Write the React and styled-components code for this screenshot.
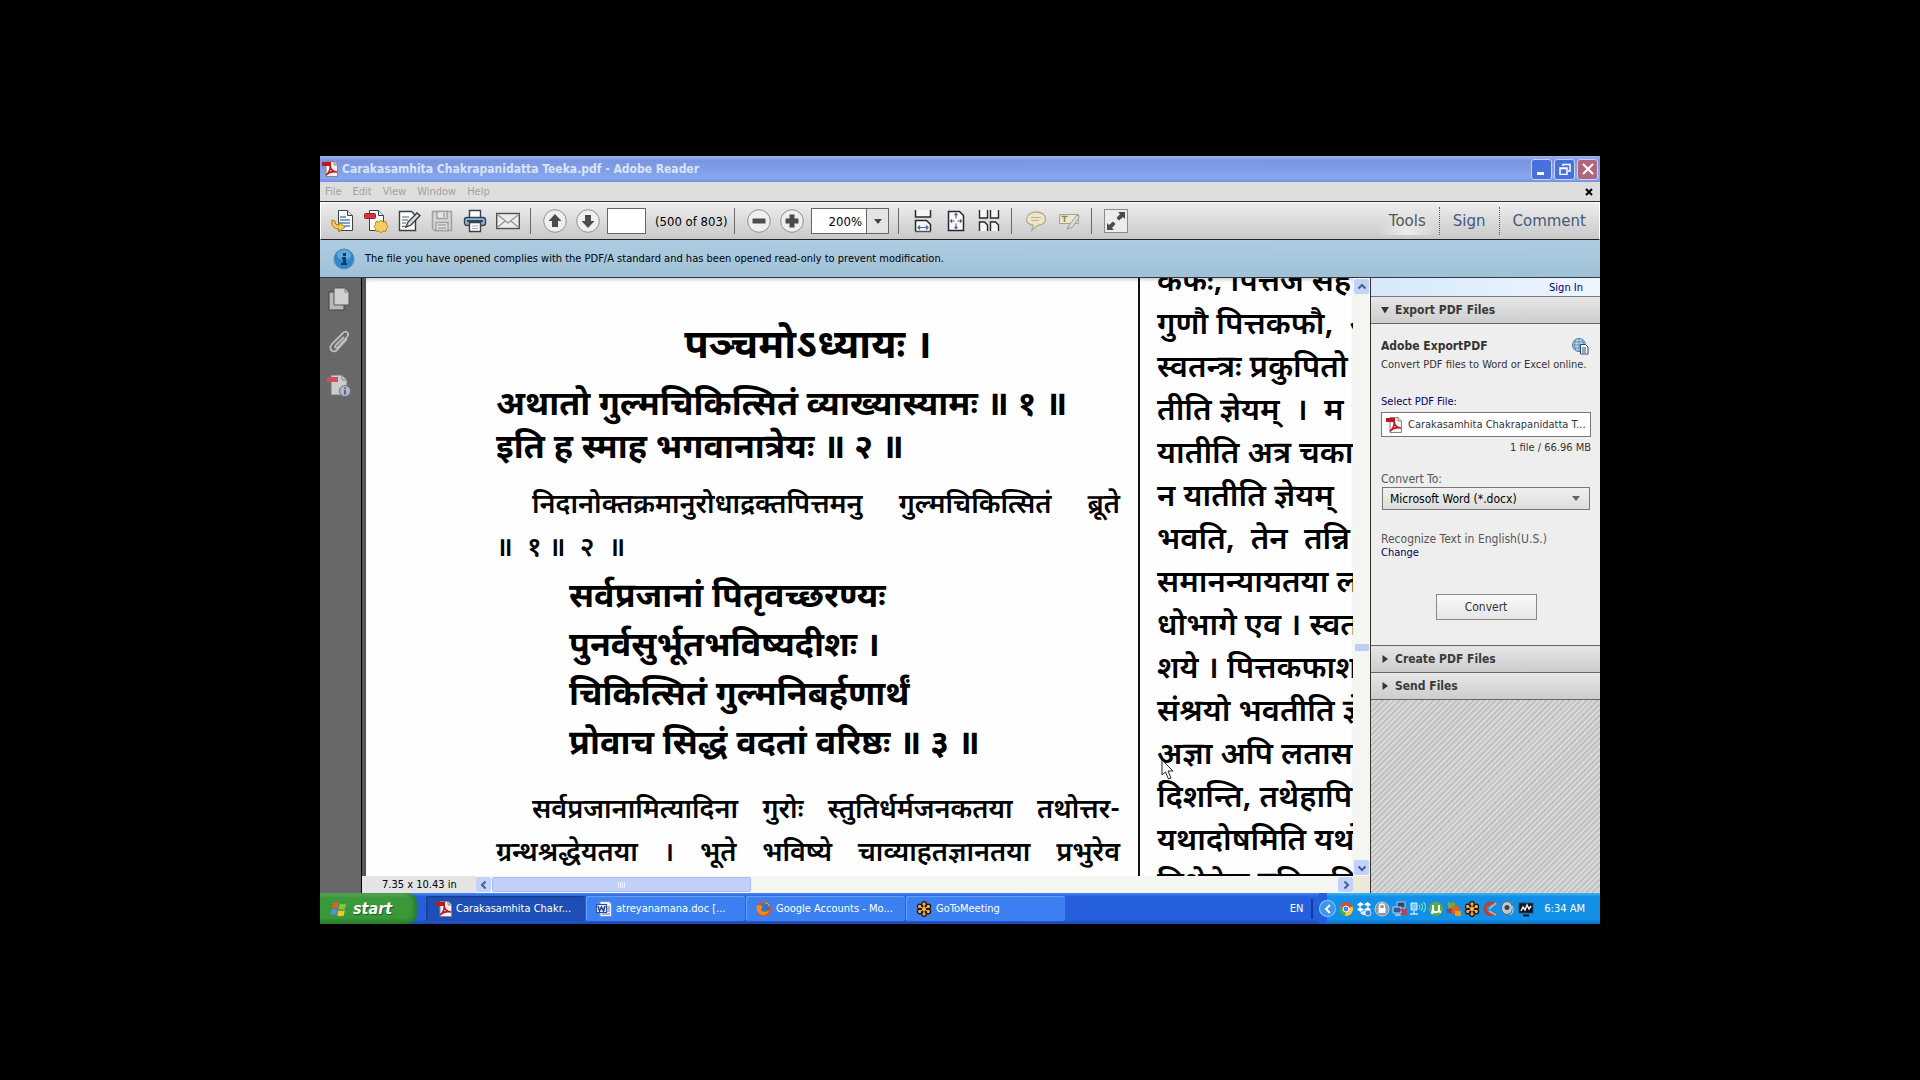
import { useState } from 'react'
import styled, { createGlobalStyle, css } from 'styled-components'

const GlobalStyle = createGlobalStyle`
  * { box-sizing: border-box; }
  body {
    margin: 0;
    background: #000;
    font-family: "DejaVu Sans Condensed", "DejaVu Sans", sans-serif;
    font-size: 11px;
    color: #000;
  }
  button, input, select { font: inherit; color: inherit; margin: 0; }
  button { padding: 0; border: 0; background: none; }
  svg { display: block; flex: none; }
`

const verses = [
  'सर्वप्रजानां पितृवच्छरण्यः',
  'पुनर्वसुर्भूतभविष्यदीशः ।',
  'चिकित्सितं गुल्मनिबर्हणार्थं',
  'प्रोवाच सिद्धं वदतां वरिष्ठः ॥ ३ ॥',
]

const rightLines = [
  'कफः, पित्तज सह',
  'गुणौ पित्तकफौ, \u00a0अ',
  'स्वतन्त्रः प्रकुपितो',
  'तीति ज्ञेयम् \u00a0। \u00a0म',
  'यातीति अत्र चका',
  'न यातीति ज्ञेयम्',
  'भवति, \u00a0तेन \u00a0तन्नि',
  'समानन्यायतया ल',
  'धोभागे एव । स्वत',
  'शये । पित्तकफाश',
  'संश्रयो भवतीति ज्ञे',
  'अज्ञा अपि लतासम',
  'दिशन्ति, तथेहापि',
  'यथादोषमिति यथो',
  'विशेषेण प्रतिपादि',
]

const PdfIcon = ({ size = 16 }) => (
  <svg width={size} height={size} viewBox='0 0 16 16'>
    <path d='M4 .5h8l3.500 3.500v11.500H4z' fill='#f6f4f2' stroke='#8b8583' />
    <path d='M12 .5V4h3.500' fill='#ddd' stroke='#8b8583' />
    <path d='M0 1h9v4H0z' fill='#c01820' />
    <path d='M4 14c3-2 5-6 4-9 1 4 3 6 7 6-4-1-8 0-11 3z' fill='none' stroke='#c01820' strokeWidth='1.600' />
  </svg>
)

const WordIcon = () => (
  <svg width='16' height='16' viewBox='0 0 16 16'>
    <path d='M4 .5h9l2.500 2.500v12.500H4z' fill='#e9f0fb' stroke='#7b93c4' />
    <path d='M11 6h3M11 8h3M11 10h3M6 13h8' stroke='#5b7dc0' />
    <rect x='0.500' y='3.500' width='10' height='8' fill='#dfe8f8' stroke='#2b4f98' />
    <path d='M2 5l1.500 5L5.500 6l2 4L9 5' fill='none' stroke='#1c3f8c' strokeWidth='1.400' />
  </svg>
)

const FirefoxIcon = () => (
  <svg width='16' height='16' viewBox='0 0 16 16'>
    <circle cx='8' cy='8' r='7.500' fill='#e0561b' />
    <circle cx='9' cy='7' r='5' fill='#3a74b8' />
    <path d='M1 4c1 1 3 0 5 1 1 1 0 2-1 3 0 3 5 4 8 1-1 5-6 6-9 4S0 8 1 4z' fill='#f08a24' />
    <path d='M9 2c2 0 4 1 4 3' stroke='#9cc8e8' fill='none' />
  </svg>
)

const FlowerIcon = () => (
  <svg width='16' height='16' viewBox='0 0 16 16'>
    <g fill='#f2b04a' stroke='#1d1206' strokeWidth='1.300'>
      <circle cx='8' cy='3' r='2.300' />
      <circle cx='12.300' cy='5.500' r='2.300' />
      <circle cx='12.300' cy='10.500' r='2.300' />
      <circle cx='8' cy='13' r='2.300' />
      <circle cx='3.700' cy='10.500' r='2.300' />
      <circle cx='3.700' cy='5.500' r='2.300' />
    </g>
    <circle cx='8' cy='8' r='2.400' fill='#f8d28c' stroke='#1d1206' />
    <path d='M8 4v8M4.500 6l7 4M11.500 6l-7 4' stroke='#f2b04a' />
  </svg>
)

const WindowsFlag = () => (
  <svg width='18' height='18' viewBox='0 0 18 18'>
    <path d='M3 3c2-1.500 4-1 5.500 0L7.500 8.500C6 7.500 4 7.500 2 8.500z' fill='#e8592b' />
    <path d='M9.500 3.500c2 1 4 1 6.500 0L15 9c-2 1-4.500 1-6.500 0z' fill='#86c440' />
    <path d='M1.800 9.800c2-1.300 4-1 5.500 0l-1 5.200c-1.500-1-3.500-1-5.500 0z' fill='#5b8df0' />
    <path d='M8.300 10.200c2 1 4 1 6.500 0l-1 5.300c-2 1-4.500 1-6.500 0z' fill='#f8c52c' />
  </svg>
)

const toolIcons = {
  open: (
    <>
      <path d='M7.500 1.500h9l5 5v15h-14z' fill='#fff' stroke='#3c4146' />
      <path d='M16.500 1.500v5h5' fill='#dfe3e6' stroke='#3c4146' />
      <path d='M9 8h6M9 11h10M9 14h10M13 17h6' stroke='#5580b8' strokeWidth='1.500' />
      <path d='M1 11c-1 6 2 9 7 9v3l6-5-6-5v3c-3 0-4-1-4-4z' fill='#f6c854' stroke='#a67c1c' />
    </>
  ),
  create: (
    <>
      <path d='M5.500 1.500h9l5 5v15h-14z' fill='#fff' stroke='#3c4146' />
      <path d='M14.500 1.500v5h5' fill='#dfe3e6' stroke='#3c4146' />
      <rect x='0.500' y='4.500' width='11' height='5' rx='1' fill='#d5343a' stroke='#9a1f24' />
      <path d='M17 11l2 2 3-.500.500 3 1.500 2-1.500 2-.500 3-3-.500-2 2-2-2-3 .500-.500-3L10 17.500l1.500-2 .500-3 3 .500z' fill='#f5cd60' stroke='#b48a28' />
    </>
  ),
  edit: (
    <>
      <path d='M2.500 2.500h12l4 4v15h-16z' fill='#fff' stroke='#3c4146' strokeWidth='1.400' />
      <path d='M5 8h7M5 11h6M5 14h4' stroke='#8a9299' strokeWidth='1.500' />
      <path d='M9 18l2-5L20 4l3 2.500-9 9.500z' fill='#d8dde0' stroke='#33383d' strokeWidth='1.300' />
      <path d='M5 18c2-2 3 1 5-1' stroke='#33383d' fill='none' />
    </>
  ),
  save: (
    <g fill='#d4d5d7' stroke='#9fa1a4' strokeWidth='1.500'>
      <path d='M2.500 2.500h19v19h-17l-2-2z' />
      <path d='M7 2.500h10v7H7z' fill='#e6e6e7' />
      <path d='M6 13.500h12v8H6zM8 16h8M8 19h8' fill='#e6e6e7' />
      <path d='M14 4v4' />
    </g>
  ),
  print: (
    <>
      <path d='M6.500 9V1.500h11V9' fill='#fff' stroke='#3c4146' strokeWidth='1.400' />
      <rect x='1.500' y='8.500' width='21' height='8' rx='2.500' fill='#8fb4d8' stroke='#2f4356' strokeWidth='1.400' />
      <path d='M4 12h16' stroke='#33465a' strokeWidth='2' />
      <path d='M6.500 13.500h11v9h-11z' fill='#fff' stroke='#3c4146' strokeWidth='1.400' />
      <path d='M9 17h6M9 19.500h6' stroke='#a5adb4' />
    </>
  ),
  mail: (
    <>
      <rect x='0.700' y='4.500' width='22.600' height='15' fill='#ececec' stroke='#4c5054' strokeWidth='1.400' />
      <path d='M2 6l10 8L22 6M2 18l7-6M22 18l-7-6' fill='none' stroke='#8e9296' strokeWidth='1.200' />
    </>
  ),
  fitWidth: (
    <g fill='none' stroke='#26292c' strokeWidth='1.500'>
      <path d='M4.500 1v7h15V1' fill='#f7f7f7' />
      <path d='M4.500 22V11.500h11l4 4V22' fill='#f7f7f7' />
      <path d='M4 22.500h16' stroke='#555' />
      <path d='M7 18.500h10M9 16.500l-2 2 2 2M15 16.500l2 2-2 2' stroke='#4a68a8' strokeWidth='1.200' />
    </g>
  ),
  fitPage: (
    <g fill='none' stroke='#26292c' strokeWidth='1.500'>
      <path d='M4.500 2.500h11l4 4v15h-15z' fill='#f7f7f7' />
      <path d='M12 4.500v5M12 14.500v5M6.500 12h4M13.500 12h4M10.500 6l1.500-1.500L13.500 6M10.500 18l1.500 1.500 1.500-1.500M8 10.500L6.500 12 8 13.500M16 10.500l1.500 1.500-1.500 1.500' stroke='#4f5f80' strokeWidth='1.100' />
    </g>
  ),
  twoUp: (
    <g fill='#f7f7f7' stroke='#26292c' strokeWidth='1.400'>
      <path d='M2.500 1v8h8V1M13.500 1v8h8V1' />
      <path d='M2.500 22v-9h5l3 3v6M13.500 22v-9h5l3 3v6' />
    </g>
  ),
  note: (
    <>
      <path d='M12 3c6 0 9.500 3 9.500 7s-3.500 6-8 6.500L8 21l1-5C4.500 15.500 2.500 13 2.500 10S6 3 12 3z' fill='#ebe6cc' stroke='#b3aa86' strokeWidth='1.300' />
      <path d='M7 8.500h10M7 11.500h8' stroke='#bdb48e' />
    </>
  ),
  highlight: (
    <>
      <path d='M2.500 5.500h19v9h-19z' fill='#ece7cf' stroke='#a8a288' />
      <path d='M4.500 7.500h6M7.500 7.500V13' stroke='#8b8567' strokeWidth='1.500' />
      <path d='M10 20l3-5 7-9 2.500 2-7 10z' fill='#dcdcdc' stroke='#999' />
    </>
  ),
  full: (
    <>
      <rect x='0.500' y='0.500' width='23' height='23' fill='#ececec' stroke='#8b8b8b' />
      <path d='M14 3h7v7l-2-2-4 3.500-2.500-2.500L16 5zM10 21H3v-7l2 2 4-3.500 2.500 2.500L8 19z' fill='#4b4b4b' />
    </>
  ),
}

const roundIcons = {
  up: 'M12 5l6.500 7H15v6H9v-6H5.500z',
  down: 'M12 19l6.500-7H15V6H9v6H5.500z',
  minus: 'M5.500 9.500h13v5h-13z',
  plus: 'M9.500 5.500h5v4h4v5h-4v4h-5v-4h-4v-5h4z',
}

const Tool = ({ name, label }) => (
  <ToolButton aria-label={label}>
    <svg width='24' height='24' viewBox='0 0 24 24'>
      {toolIcons[name]}
    </svg>
  </ToolButton>
)

const RoundTool = ({ name, label }) => (
  <ToolButton aria-label={label}>
    <svg width='24' height='24' viewBox='0 0 24 24'>
      <circle cx='12' cy='12' r='11.300' fill='#efefef' stroke='#8f8f8f' />
      <path d={roundIcons[name]} fill='#4c4c4c' />
    </svg>
  </ToolButton>
)

const Chevron = ({ turn = 0 }) => (
  <svg width='10' height='10' viewBox='0 0 10 10'>
    <path d='M1.500 6.500L5 3l3.500 3.500' fill='none' stroke='#44608f' strokeWidth='2' transform={`rotate(${turn} 5 5)`} />
  </svg>
)

const Triangle = ({ open }) => (
  <svg width='8' height='8' viewBox='0 0 8 8'>
    <path d={open ? 'M0 1h8L4 7.500z' : 'M1.500 0v8L7 4z'} fill='#333' />
  </svg>
)

const trayIcons = [
  <>
    <circle cx='8' cy='8' r='7' fill='#d8483a' />
    <path d='M8 8L2 4.500A7 7 0 0 0 7 15z' fill='#4aa653' />
    <path d='M8 8l-1 7a7 7 0 0 0 7.500-9.500z' fill='#f2cc3c' />
    <circle cx='8' cy='8' r='3' fill='#4a86d8' stroke='#fff' />
  </>,
  <>
    <path d='M4.500 1L8 3.300 4 6 1 3.500zM11.500 1L8 3.300 12 6l3-2.500zM1 8.500L4 6l4 2.500L4.500 11zM15 8.500L12 6 8 8.500l3.500 2.500z' fill='#f3f9ff' />
    <path d='M4 12l4-2.500 4 2.500-4 2.500z' fill='#e2f0ff' />
    <circle cx='12' cy='12' r='3' fill='#3a7be0' stroke='#d9eaff' />
  </>,
  <>
    <circle cx='8' cy='8' r='7' fill='#8d98a4' stroke='#c6ccd2' />
    <path d='M5.500 7V5.500a2.500 2.500 0 0 1 5 0V7' fill='none' stroke='#fff' strokeWidth='1.500' />
    <path d='M4.500 7h7v5h-7z' fill='#fff' />
  </>,
  <>
    <path d='M5 1h8v6H5z' fill='#2c4678' stroke='#b6c8e8' />
    <path d='M1 6h8v6H1z' fill='#38589a' stroke='#c3d3ee' />
    <path d='M3 14h6' stroke='#c3d3ee' strokeWidth='1.500' />
    <path d='M9 8l6 6M15 8l-6 6' stroke='#d93434' strokeWidth='2.200' />
  </>,
  <>
    <path d='M1 2h6v7H1z' fill='#7cc6f4' stroke='#d5efff' />
    <path d='M0 13h8M4 10v3' stroke='#bfe2f8' strokeWidth='1.500' />
    <path d='M9 4c1 1 1 3 0 4M11 2.500c2 2 2 5 0 7M13.500 1c2.500 3 2.500 7 0 10' stroke='#7be0a0' fill='none' strokeWidth='1.200' />
  </>,
  <>
    <circle cx='8' cy='8' r='7.200' fill='#5da84a' />
    <path d='M5 4v5c0 3 5 3 6 0V4M11 9c0 2 1 2 2 2M5 8l-1 5' stroke='#fff' strokeWidth='2' fill='none' />
  </>,
  <>
    <path d='M2 1l4 1 3-1v6H2z' fill='#7ba83c' />
    <path d='M6 5h7v8H6z' fill='#d3642c' />
    <path d='M1 8h5v4H1z' fill='#b43a2e' />
    <path d='M9 10h6v5H9z' fill='#e29a2c' />
  </>,
  null,
  <>
    <path d='M13 3c-4-3-10 0-10 5s5 7 10 4' stroke='#c23e30' strokeWidth='3' fill='none' />
    <path d='M7 8l7-6M7 10l7 4' stroke='#d9a58c' strokeWidth='1.800' />
  </>,
  <>
    <ellipse cx='7' cy='7' rx='5.500' ry='6.500' fill='#c3c9d0' stroke='#5d6670' />
    <circle cx='7' cy='6.500' r='2.500' fill='#3c444d' />
    <path d='M12 5c2 3 1 7-2 9' stroke='#cfe3f7' fill='none' />
  </>,
  <>
    <path d='M1 2h14v10H1z' fill='#0d1420' stroke='#31455e' />
    <path d='M3 10l2-4 2 3 2-5 2 4 2-3' stroke='#e8eef4' strokeWidth='1.500' fill='none' />
    <path d='M5 14.500h6' stroke='#0d1420' strokeWidth='2' />
  </>,
]

const tasks = [
  { text: 'Carakasamhita Chakr...', icon: <PdfIcon />, active: true },
  { text: 'atreyanamana.doc [...', icon: <WordIcon /> },
  { text: 'Google Accounts - Mo...', icon: <FirefoxIcon /> },
  { text: 'GoToMeeting', icon: <FlowerIcon /> },
]

const App = () => {
  const [page, setPage] = useState('')

  return (
    <Stage>
      <GlobalStyle />
      <Desktop>
        <TitleBar>
          <PdfIcon />
          <Title>Carakasamhita Chakrapanidatta Teeka.pdf - Adobe Reader</Title>
          <WindowButton aria-label='Minimize'>
            <svg width='12' height='12' viewBox='0 0 12 12'><path d='M1 9h7v3H1z' fill='#fff' /></svg>
          </WindowButton>
          <WindowButton aria-label='Restore'>
            <svg width='12' height='12' viewBox='0 0 12 12'>
              <path d='M4 3V1.500h7V8H9M4 1.500h7M1 5h7v6.500H1zM1 5.500h7' fill='none' stroke='#fff' strokeWidth='1.500' />
            </svg>
          </WindowButton>
          <WindowButton aria-label='Close' $close>
            <svg width='12' height='12' viewBox='0 0 12 12'><path d='M1 1l10 10M11 1L1 11' stroke='#fff' strokeWidth='2' /></svg>
          </WindowButton>
        </TitleBar>
        <MenuBar>
          {['File', 'Edit', 'View', 'Window', 'Help'].map(item => (
            <MenuItem key={item}>{item}</MenuItem>
          ))}
          <CloseDocument aria-label='Close document'>
            <svg width='8' height='8' viewBox='0 0 8 8'><path d='M1 1l6 6M7 1L1 7' stroke='#000' strokeWidth='2' /></svg>
          </CloseDocument>
        </MenuBar>
        <Toolbar>
          <ToolGroup>
            <Tool name='open' label='Open' />
            <Tool name='create' label='Create PDF' />
            <Tool name='edit' label='Edit' />
            <Tool name='save' label='Save' />
            <Tool name='print' label='Print' />
            <Tool name='mail' label='Email' />
          </ToolGroup>
          <ToolGroup>
            <RoundTool name='up' label='Previous page' />
            <RoundTool name='down' label='Next page' />
            <PageInput aria-label='Page number' value={page} onChange={e => setPage(e.target.value)} />
            <PageCount>(500 of 803)</PageCount>
          </ToolGroup>
          <ToolGroup>
            <RoundTool name='minus' label='Zoom out' />
            <RoundTool name='plus' label='Zoom in' />
            <ZoomBox>
              <ZoomSelect aria-label='Zoom' defaultValue='200%'>
                <option>100%</option>
                <option>200%</option>
              </ZoomSelect>
              <ZoomArrow>
                <svg width='8' height='5' viewBox='0 0 8 5'><path d='M0 0h8L4 5z' fill='#444' /></svg>
              </ZoomArrow>
            </ZoomBox>
          </ToolGroup>
          <ToolGroup>
            <Tool name='fitWidth' label='Fit width' />
            <Tool name='fitPage' label='Fit page' />
            <Tool name='twoUp' label='Two pages' />
          </ToolGroup>
          <ToolGroup>
            <Tool name='note' label='Add note' />
            <Tool name='highlight' label='Highlight' />
          </ToolGroup>
          <ToolGroup $last>
            <Tool name='full' label='Read mode' />
          </ToolGroup>
          <PaneTabs>
            <PaneTab $active>Tools</PaneTab>
            <PaneTab>Sign</PaneTab>
            <PaneTab>Comment</PaneTab>
          </PaneTabs>
        </Toolbar>
        <InfoBar>
          <svg width='22' height='22' viewBox='0 0 22 22'>
            <circle cx='11' cy='11' r='10' fill='#3187c8' stroke='#5c8fb4' />
            <ellipse cx='11' cy='7' rx='7' ry='5' fill='#7cc0ec' opacity='.6' />
            <path d='M10 5h3v3h-3zM9 9h4v6h1v2H8v-2h2v-4H9z' fill='#123a66' />
          </svg>
          The file you have opened complies with the PDF/A standard and has been opened read-only to prevent modification.
        </InfoBar>
        <Workspace>
          <NavRail>
            <RailButton aria-label='Page thumbnails'>
              <svg width='22' height='24' viewBox='0 0 22 24'>
                <path d='M1 5h15v18H1z' fill='#b9b9b9' stroke='#444' />
                <path d='M6 1h11l4 4v13H6z' fill='#d0d0d0' stroke='#555' />
                <path d='M17 1v4h4' fill='none' stroke='#777' />
              </svg>
            </RailButton>
            <RailButton aria-label='Attachments'>
              <svg width='22' height='24' viewBox='0 0 22 24'>
                <path d='M16 7L8 15c-2 2 0 4 2 2l9-10c3-4-1-7-4-4L4 14c-4 5 1 10 5 6l10-11' fill='none' stroke='#bdbdbd' strokeWidth='1.800' />
              </svg>
            </RailButton>
            <RailButton aria-label='Standards'>
              <svg width='24' height='24' viewBox='0 0 24 24'>
                <path d='M4 2h11l5 5v15H4z' fill='#cdcdcd' stroke='#777' />
                <path d='M15 2v5h5' fill='none' stroke='#888' />
                <path d='M0 4h11v5H0z' fill='#cf5055' />
                <circle cx='18' cy='18' r='5.500' fill='#b4b8cc' stroke='#6d7188' />
                <path d='M18 14.500v1.500M18 17v4.500' stroke='#4d5168' strokeWidth='1.600' />
              </svg>
            </RailButton>
          </NavRail>
          <Viewer>
            <ViewRow>
              <Page>
                <LeftColumn>
                  <Heading>पञ्चमोऽध्यायः ।</Heading>
                  <Sutra>अथातो गुल्मचिकित्सितं व्याख्यास्यामः ॥ १ ॥</Sutra>
                  <Sutra>इति ह स्माह भगवानात्रेयः ॥ २ ॥</Sutra>
                  <Commentary>
                    <Line $indent $fill>निदानोक्तक्रमानुरोधाद्रक्तपित्तमनु गुल्मचिकित्सितं ब्रूते</Line>
                    <Line>॥ &nbsp;१ ॥ &nbsp;२ &nbsp;॥</Line>
                  </Commentary>
                  <VerseBlock>
                    {verses.map(verse => (
                      <Verse key={verse}>{verse}</Verse>
                    ))}
                  </VerseBlock>
                  <Commentary>
                    <Line $indent $fill>सर्वप्रजानामित्यादिना गुरोः स्तुतिर्धर्मजनकतया तथोत्तर-</Line>
                    <Line $fill>ग्रन्थश्रद्धेयतया । भूते भविष्ये चाव्याहतज्ञानतया प्रभुरेव</Line>
                  </Commentary>
                </LeftColumn>
                <RightColumn>
                  {rightLines.map(line => (
                    <Line key={line} $large>{line}</Line>
                  ))}
                </RightColumn>
                <Cursor width='14' height='22' viewBox='0 0 14 22'>
                  <path d='M1 1v15l3.500-3 3 7 2.500-1-3-7h5z' fill='#fff' stroke='#222' />
                </Cursor>
              </Page>
              <VScroll>
                <ScrollButton aria-label='Scroll up'><Chevron /></ScrollButton>
                <VThumb />
                <ScrollButton aria-label='Scroll down'><Chevron turn={180} /></ScrollButton>
              </VScroll>
            </ViewRow>
            <StatusRow>
              <PageSize>7.35 x 10.43 in</PageSize>
              <ScrollButton aria-label='Scroll left'><Chevron turn={-90} /></ScrollButton>
              <HThumb><i /><i /><i /><i /></HThumb>
              <ScrollButton aria-label='Scroll right'><Chevron turn={90} /></ScrollButton>
              <Corner />
            </StatusRow>
          </Viewer>
          <Pane>
            <SignInBar><PaneLink href='#sign-in'>Sign In</PaneLink></SignInBar>
            <PaneHeader><Triangle open />Export PDF Files</PaneHeader>
            <PaneBody>
              <PaneTitle>
                Adobe ExportPDF
                <svg width='17' height='17' viewBox='0 0 17 17'>
                  <circle cx='7' cy='7' r='6.500' fill='#b5d6ee' stroke='#4679a5' />
                  <path d='M1 7h12M7 1v12M2 4h10M2 10h10M4 2c-2 3-2 7 0 10M10 2c2 3 2 7 0 10' fill='none' stroke='#4679a5' strokeWidth='.7' />
                  <path d='M8.500 6.500h5l2.500 2.500v7H8.500z' fill='#fff' stroke='#234a70' />
                  <path d='M10 10h4M10 12h4M10 14h4' stroke='#234a70' />
                </svg>
              </PaneTitle>
              <PaneText>Convert PDF files to Word or Excel online.</PaneText>
              <FileLabel htmlFor='pdf-file'>Select PDF File:</FileLabel>
              <FileBox>
                <PdfIcon />
                <FileInput id='pdf-file' readOnly value='Carakasamhita Chakrapanidatta T...' />
              </FileBox>
              <FileSize>1 file / 66.96 MB</FileSize>
              <ConvertLabel htmlFor='convert-to'>Convert To:</ConvertLabel>
              <FormatBox>
                <FormatSelect id='convert-to'>
                  <option>Microsoft Word (*.docx)</option>
                </FormatSelect>
                <svg width='8' height='5' viewBox='0 0 8 5'><path d='M0 0h8L4 5z' fill='#666' /></svg>
              </FormatBox>
              <Recognize>Recognize Text in English(U.S.)</Recognize>
              <PaneLink href='#change'>Change</PaneLink>
              <ConvertButton>Convert</ConvertButton>
            </PaneBody>
            <PaneHeader><Triangle />Create PDF Files</PaneHeader>
            <PaneHeader><Triangle />Send Files</PaneHeader>
          </Pane>
        </Workspace>
        <Taskbar>
          <StartButton><WindowsFlag />start</StartButton>
          <Tasks>
            {tasks.map(task => (
              <Task key={task.text} $active={task.active}>
                {task.icon}
                {task.text}
              </Task>
            ))}
          </Tasks>
          <Language>EN</Language>
          <Tray>
            <TrayToggle aria-label='Show hidden icons'>
              <svg width='8' height='10' viewBox='0 0 8 10'><path d='M6 1L2 5l4 4' fill='none' stroke='#fff' strokeWidth='2' /></svg>
            </TrayToggle>
            {trayIcons.map((icon, i) => (
              icon ? <svg key={i} width='16' height='16' viewBox='0 0 16 16'>{icon}</svg> : <FlowerIcon key={i} />
            ))}
            <Clock>6:34 AM</Clock>
          </Tray>
        </Taskbar>
      </Desktop>
    </Stage>
  )
}

const Stage = styled.div`
  display: flex;
  height: 100vh;
  padding: 156px calc(100vw / 6);
  background: #000;
`

const Desktop = styled.div`
  display: flex;
  flex-direction: column;
  flex: 1;
  min-width: 0;
  background: #dedede;
`

const TitleBar = styled.header`
  display: flex;
  align-items: center;
  gap: 2px;
  flex: none;
  height: 26px;
  padding: 0 2px;
  background: linear-gradient(#9ab6f0, #7b96e0 18%, #7f9de6 50%, #86a8ee 85%, #7390dc);
`

const Title = styled.h1`
  flex: 1;
  margin: 0 0 0 2px;
  font-size: 12px;
  font-weight: bold;
  color: #d8e4fa;
`

const WindowButton = styled.button`
  display: grid;
  place-items: center;
  width: 21px;
  height: 21px;
  border: 1px solid #c6d3f5;
  border-radius: 3px;
  background: ${props => props.$close ? '#b0667c' : '#4a70dd'};
`

const MenuBar = styled.nav`
  display: flex;
  align-items: center;
  gap: 11px;
  flex: none;
  height: 20px;
  padding: 0 7px 0 5px;
  border-bottom: 1px solid #333;
  background: #dedede;
`

const MenuItem = styled.button`
  color: #a3a297;
`

const CloseDocument = styled.button`
  margin-left: auto;
`

const Toolbar = styled.div`
  display: flex;
  align-items: center;
  flex: none;
  height: 38px;
  padding-left: 5px;
  border: 1px solid #fff;
  border-bottom: 1px solid #222;
  background: linear-gradient(#ededed, #c9c9c9);
`

const ToolGroup = styled.div`
  display: flex;
  align-items: center;
  height: 26px;
  padding-right: 6px;
  margin-right: 7px;
  border-right: ${props => props.$last ? '0' : '1px solid #6a6a6a'};
`

const ToolButton = styled.button`
  display: grid;
  place-items: center;
  width: 33px;
  height: 26px;
`

const PageInput = styled.input`
  width: 39px;
  height: 26px;
  margin: 0 9px 0 3px;
  border: 1px solid #666;
  background: #fff;
  font-size: 13px;
`

const PageCount = styled.span`
  width: 73px;
  font-size: 13px;
  white-space: nowrap;
`

const ZoomBox = styled.div`
  display: flex;
  width: 78px;
  height: 26px;
  margin: 0 3px;
  border: 1px solid #666;
  background: #fff;
`

const ZoomSelect = styled.select`
  appearance: none;
  flex: 1;
  width: 54px;
  padding: 0 4px 0 0;
  border: 0;
  background: none;
  font-size: 13px;
  text-align: right;
  text-align-last: right;
`

const ZoomArrow = styled.span`
  display: grid;
  place-items: center;
  width: 22px;
  border-left: 1px solid #666;
  background: #e4e4e4;
`

const PaneTabs = styled.div`
  display: flex;
  margin-left: auto;
`

const PaneTab = styled.button`
  height: 28px;
  padding: 0 13px;
  border-left: 1px dotted #555;
  font-family: "DejaVu Sans", sans-serif;
  font-size: 15px;
  color: #45597a;

  ${props => props.$active && css`
    border-left: 0;
    color: #555;
    background: radial-gradient(ellipse at bottom, #eceeec, transparent 70%);
  `}
`

const InfoBar = styled.div`
  display: flex;
  align-items: center;
  gap: 10px;
  flex: none;
  height: 38px;
  padding-left: 13px;
  border-bottom: 1px solid #2c3a46;
  background: linear-gradient(#afcde2, #9fc1d6);
  white-space: nowrap;
`

const Workspace = styled.main`
  display: flex;
  flex: 1;
  min-height: 0;
`

const NavRail = styled.nav`
  display: flex;
  flex-direction: column;
  align-items: center;
  gap: 19px;
  flex: none;
  width: 42px;
  padding: 9px 4px 0 0;
  border-right: 1px solid #000;
  background: #686868;
`

const RailButton = styled.button`
  display: grid;
  place-items: center;
  width: 24px;
  height: 24px;
`

const Viewer = styled.section`
  display: flex;
  flex-direction: column;
  flex: 1;
  min-width: 0;
`

const ViewRow = styled.div`
  display: flex;
  flex: 1;
  min-height: 0;
  border-left: 4px solid #555;
`

const Page = styled.article`
  position: relative;
  display: grid;
  grid-template-columns: 774px 1fr;
  flex: 1;
  overflow: hidden;
  background: #fefefe;
  box-shadow: inset 0 3px 4px -2px #bbb;
  font-family: "Noto Sans Devanagari", "Noto Sans", "Lohit Devanagari", FreeSans, sans-serif;
  white-space: nowrap;
`

const LeftColumn = styled.div`
  padding: 46px 18px 0 130px;
  border-right: 2px solid #111;
`

const Heading = styled.h2`
  margin: 0 0 14px;
  font-size: 40px;
  line-height: 48px;
  font-weight: 700;
  text-align: center;
`

const Sutra = styled.p`
  margin: 0;
  font-size: 34px;
  line-height: 43px;
  font-weight: 700;
`

const Commentary = styled.div`
  margin: 13px 0 4px;
`

const Line = styled.p`
  margin: 0;
  padding-left: ${props => props.$indent ? '36px' : '0'};
  font-size: ${props => props.$large ? '31px' : '27px'};
  line-height: 43px;
  font-weight: 600;
  text-align-last: ${props => props.$fill ? 'justify' : 'left'};
`

const VerseBlock = styled.div`
  padding: 0 0 6px 73px;
`

const Verse = styled.p`
  margin: 0;
  font-size: 34px;
  line-height: 49px;
  font-weight: 700;
`

const RightColumn = styled.div`
  margin-top: -16px;
  padding-left: 17px;
  overflow: hidden;
`

const Cursor = styled.svg`
  position: absolute;
  left: 795px;
  top: 481px;
`

const VScroll = styled.div`
  display: flex;
  flex-direction: column;
  align-items: center;
  justify-content: space-between;
  width: 17px;
  padding: 1px;
  background: #f5f5f1;
`

const ScrollButton = styled.button`
  display: grid;
  place-items: center;
  flex: none;
  width: 15px;
  height: 15px;
  border-radius: 2px;
  background: #c3d2fa;
`

const VThumb = styled.div`
  width: 14px;
  height: 7px;
  margin-top: 141px;
  border-radius: 1px;
  background: #c0cdf6;
`

const StatusRow = styled.div`
  display: flex;
  align-items: center;
  flex: none;
  height: 17px;
  background: #f5f5f1;
`

const PageSize = styled.span`
  width: 114px;
  padding-left: 20px;
  line-height: 17px;
  background: #e4e4e4;
`

const HThumb = styled.div`
  display: flex;
  align-items: center;
  justify-content: center;
  gap: 1px;
  width: 259px;
  height: 15px;
  margin: 0 auto 0 1px;
  border: 1px solid #a9bdf0;
  border-radius: 2px;
  background: #c2d0f8;

  i {
    width: 1px;
    height: 6px;
    background: #eef3ff;
  }
`

const Corner = styled.div`
  width: 17px;
  height: 17px;
  background: #ece9d8;
`

const Pane = styled.aside`
  display: flex;
  flex-direction: column;
  flex: none;
  width: 230px;
  border-left: 1px solid #333;
  background: repeating-linear-gradient(135deg, #d8d8d8 0 2px, #c2c2c2 2px 4px);
`

const SignInBar = styled.div`
  height: 19px;
  padding-right: 17px;
  border-bottom: 1px solid #777;
  background: linear-gradient(90deg, #d6e8fa, #eef6ff);
  line-height: 20px;
  text-align: right;
`

const PaneLink = styled.a`
  color: #00006a;
  text-decoration: none;
`

const PaneHeader = styled.button`
  display: flex;
  align-items: center;
  gap: 6px;
  height: 27px;
  padding-left: 10px;
  border-bottom: 1px solid #666;
  background: linear-gradient(#e6e6e6, #cdcdcd);
  font-size: 12px;
  font-weight: bold;
  color: #3a3a3a;
`

const PaneBody = styled.div`
  display: flex;
  flex-direction: column;
  height: 322px;
  padding: 13px 9px 0 10px;
  border-bottom: 1px solid #666;
  background: #eee;
  line-height: 14px;
  color: #333;
`

const PaneTitle = styled.h3`
  display: flex;
  align-items: center;
  justify-content: space-between;
  margin: 0;
  padding-right: 2px;
  font-size: 12px;
  line-height: 18px;
`

const PaneText = styled.p`
  margin: 3px 0 23px;
  white-space: nowrap;
`

const FileLabel = styled.label`
  margin-bottom: 3px;
  color: #00006a;
`

const FileBox = styled.div`
  display: flex;
  align-items: center;
  gap: 6px;
  height: 25px;
  padding-left: 4px;
  border: 1px solid #777;
  background: #fff;
`

const FileInput = styled.input`
  flex: 1;
  min-width: 0;
  padding: 0;
  border: 0;
  outline: 0;
  background: none;
`

const FileSize = styled.p`
  margin: 4px 0 17px;
  text-align: right;
`

const ConvertLabel = styled.label`
  margin-bottom: 1px;
  font-size: 12px;
  color: #555;
`

const FormatBox = styled.div`
  display: flex;
  align-items: center;
  height: 23px;
  margin: 0 1px;
  padding-right: 9px;
  border: 1px solid #777;
  background: linear-gradient(#f1f1f1, #dcdcdc);
  color: #000;
`

const FormatSelect = styled.select`
  appearance: none;
  flex: 1;
  padding: 0 0 0 7px;
  border: 0;
  background: none;
  font-size: 12px;
`

const Recognize = styled.p`
  margin: 22px 0 0;
  font-size: 12px;
  color: #555;
`

const ConvertButton = styled.button`
  align-self: center;
  width: 101px;
  height: 26px;
  margin-top: 34px;
  border: 1px solid #888;
  background: linear-gradient(#fafafa, #e6e6e6);
  font-size: 12px;
`

const Taskbar = styled.footer`
  display: flex;
  align-items: center;
  flex: none;
  height: 31px;
  background: linear-gradient(#4a8af4, #245edb 12%, #2560de 85%, #1c48ad);
  color: #fff;
`

const StartButton = styled.button`
  display: flex;
  align-items: center;
  gap: 5px;
  width: 97px;
  height: 31px;
  padding-left: 10px;
  border-radius: 0 10px 10px 0;
  background: linear-gradient(#6db56a, #3a9a3c 15%, #389839 80%, #2a7a2d);
  box-shadow: inset -3px 0 4px #2a7a2d;
  font-size: 16px;
  font-style: italic;
  font-weight: bold;
  text-shadow: 1px 1px 1px #235c26;
`

const Tasks = styled.div`
  display: flex;
  gap: 1px;
  flex: 1;
  margin-left: 9px;
`

const Task = styled.button`
  display: flex;
  align-items: center;
  gap: 4px;
  width: 159px;
  height: 25px;
  padding-left: 10px;
  border-radius: 2px;
  background: ${props => props.$active ? '#1e4fb6' : '#3c80f2'};
  box-shadow: ${props => props.$active ? 'inset 1px 1px 2px #153a8c' : 'inset 1px 1px 1px #6aa0fa'};
  font-size: 11px;
  white-space: nowrap;
`

const Language = styled.span`
  padding-right: 8px;
  margin-right: 6px;
  border-right: 2px solid #143c9c;
  line-height: 20px;
`

const Tray = styled.div`
  display: flex;
  align-items: center;
  gap: 2px;
  height: 31px;
  padding-right: 15px;
  background: linear-gradient(90deg, #245edb 8px, transparent 8px), linear-gradient(#3cb4f6, #1290e8 12%, #1290e8 85%, #0c6ec0);
`

const TrayToggle = styled.button`
  display: grid;
  place-items: center;
  width: 17px;
  height: 17px;
  border-radius: 9px;
  background: #3a94f0;
  box-shadow: inset 0 0 0 1px #8cc4fa;
`

const Clock = styled.time`
  margin-left: 8px;
`

export default App
